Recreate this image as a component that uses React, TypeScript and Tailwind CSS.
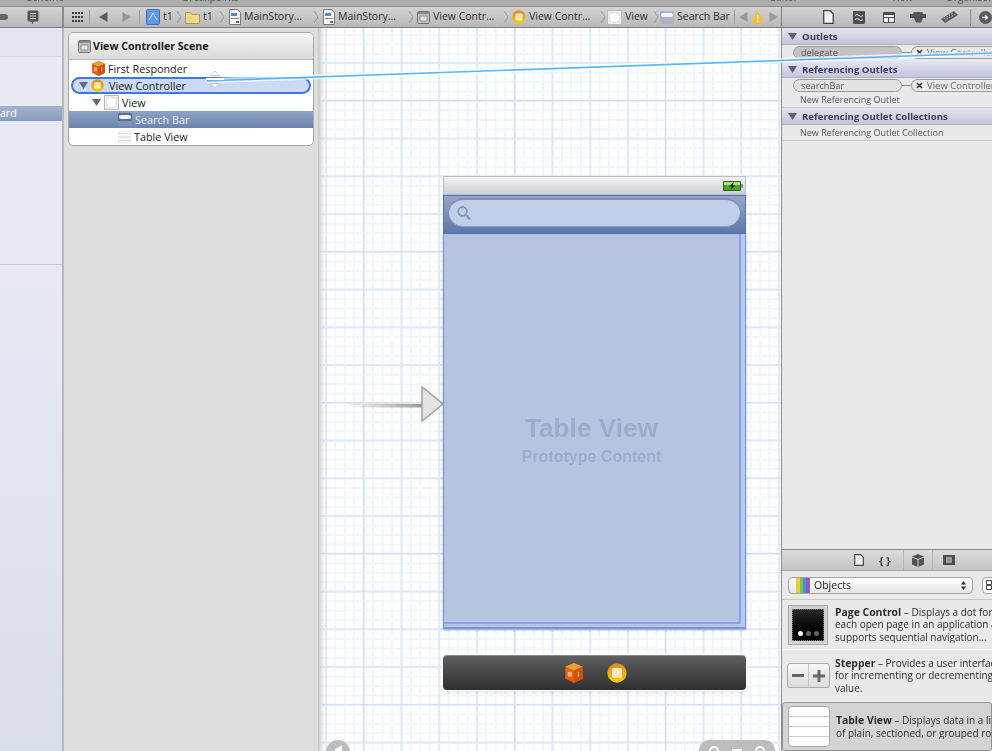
import React from "react";

const f = "font-['Open_Sans','Liberation_Sans',sans-serif]";

function Chevron() {
  return (
    <svg width="6" height="14" viewBox="0 0 6 14" className="shrink-0">
      <path d="M1 1l4 6-4 6" fill="none" stroke="#8f8f8f" strokeWidth="0.8" />
    </svg>
  );
}
function DocIcon() {
  return (
    <svg width="12" height="16" viewBox="0 0 12 16" className="shrink-0">
      <path d="M.5.5h8l3 3v12H.5z" fill="#f4f6f8" stroke="#777" />
      <rect x="2" y="4" width="6" height="3" fill="#5b86c8" />
      <rect x="2" y="9" width="8" height="1" fill="#888" />
      <rect x="7" y="12" width="3" height="2" fill="#666" />
    </svg>
  );
}
function ProjectIcon() {
  return (
    <svg width="14" height="16" viewBox="0 0 14 16" className="shrink-0">
      <rect x=".5" y=".5" width="13" height="15" rx="1" fill="#5f98ea" stroke="#3c6fc0" />
      <path d="M3 11l4-7 4 7" fill="none" stroke="#e8f1ff" strokeWidth="1" />
    </svg>
  );
}
function FolderIcon() {
  return (
    <svg width="15" height="13" viewBox="0 0 15 13" className="shrink-0">
      <path d="M.5 12.500v-11h5l1.500 2h7.500v9z" fill="#ecd98b" stroke="#a8975a" />
    </svg>
  );
}
function SceneIcon({ size = 13 }: { size?: number }) {
  return (
    <svg width={size} height={size} viewBox="0 0 13 13" className="shrink-0">
      <rect x=".5" y=".5" width="12" height="12" rx="1" fill="#c4c4c4" stroke="#707070" />
      <rect x="1" y="1" width="11" height="2" fill="#8a8a8a" />
      <rect x="3" y="5" width="7" height="5" fill="#e2e2e2" stroke="#777" strokeWidth="0.7" />
    </svg>
  );
}
function VCIcon({ size = 14 }: { size?: number }) {
  return (
    <svg width={size} height={size} viewBox="0 0 14 14" className="shrink-0">
      <defs>
        <linearGradient id="vcg" x1="0" y1="0" x2="0" y2="1">
          <stop offset="0" stopColor="#e08a1e" />
          <stop offset="1" stopColor="#f5d000" />
        </linearGradient>
      </defs>
      <circle cx="7" cy="7" r="6.800" fill="url(#vcg)" />
      <rect x="3.500" y="3.500" width="7" height="7" rx="1" fill="#fbe6bf" />
    </svg>
  );
}
function ViewIcon() {
  return (
    <svg width="15" height="15" viewBox="0 0 15 15" className="shrink-0">
      <rect x=".5" y=".5" width="14" height="14" fill="#ececec" stroke="#bbb" />
      <circle cx="7.500" cy="7.500" r="5" fill="#fff" stroke="#d0d0d0" strokeDasharray="1 1" />
    </svg>
  );
}
function SearchBarIcon({ light = false }: { light?: boolean }) {
  return (
    <svg width="14" height="13" viewBox="0 0 14 13" className="shrink-0">
      <rect x="0" y="0" width="14" height="13" fill={light ? "#5c7094" : "#a9b4c8"} />
      <rect x="1" y="2" width="12" height="4" rx="2" fill="#f2f4f8" />
      {light && <rect x="0" y="8" width="14" height="5" fill="#7e93b8" />}
    </svg>
  );
}
function TableIcon() {
  return (
    <svg width="13" height="14" viewBox="0 0 13 14" className="shrink-0">
      <rect x="0" y="0" width="13" height="14" fill="#f6f6f6" />
      <path d="M0 3.500h13M0 7h13M0 10.500h13" stroke="#dcdcdc" />
    </svg>
  );
}
function CubeIcon({ size = 14 }: { size?: number }) {
  return (
    <svg width={size} height={size + 2} viewBox="0 0 14 16" className="shrink-0">
      <path d="M7 0l7 3v9.500L7 16 0 12.500V3z" fill="#e0600f" />
      <path d="M7 0l7 3-7 3-7-3z" fill="#f29a3e" />
      <path d="M7 6l7-3v9.500L7 16z" fill="#c9520c" />
      <rect x="2" y="7" width="3.500" height="4" fill="#f5b37a" />
      <rect x="10" y="7" width="1" height="4" fill="#f5b37a" />
    </svg>
  );
}

function JumpItem({ w, icon, label }: { w: string; icon: React.ReactNode; label?: string }) {
  return (
    <div className={`flex items-center gap-[3px] shrink-0 ${w}`}>
      {icon}
      {label && <span className="text-[10.500px] text-[#2e2e2e] whitespace-nowrap">{label}</span>}
    </div>
  );
}

function Toolbar() {
  return (
    <div className="flex h-[21px] shrink-0 bg-gradient-to-b from-[#d2d2d2] to-[#b9b9b9] border-b border-[#7d7d7d]">
      <div className="w-[64px] shrink-0 border-r-2 border-[#8c8c8c] flex items-center relative">
        <div className="w-[8px] h-[6px] bg-[#666] rounded-r-full" />
        <svg width="12" height="15" viewBox="0 0 12 15" className="ml-[19px]">
          <path d="M1.500.5h9l1 1v9l-1 1H7l-1.500 2.500L4 11.500H1.500l-1-1v-9z" fill="#555" />
          <path d="M3 3.500h6M3 6h6M3 8.500h6" stroke="#ddd" />
        </svg>
      </div>
      <div className="w-[717px] shrink-0 flex items-center pl-[8px]">
        <svg width="11" height="10" viewBox="0 0 11 10" className="shrink-0">
          <path d="M0 1h11M0 5h11M0 9h11" stroke="#3a3a3a" strokeWidth="2" strokeDasharray="2 1" />
        </svg>
        <div className="w-px h-[14px] bg-[#9c9c9c] ml-[6px]" />
        <svg width="9" height="10" viewBox="0 0 9 10" className="ml-[9px]"><path d="M8.500 0v10L0 5z" fill="#5c5c5c" /></svg>
        <svg width="9" height="10" viewBox="0 0 9 10" className="ml-[14px]"><path d="M.5 0v10L9 5z" fill="#969696" /></svg>
        <div className="w-px h-[14px] bg-[#9c9c9c] ml-[8px]" />
        <div className="flex items-center ml-[6px]">
          <JumpItem w="w-[30px]" icon={<ProjectIcon />} label="t1" />
          <Chevron />
          <JumpItem w="w-[34px] ml-[3px]" icon={<FolderIcon />} label="t1" />
          <Chevron />
          <JumpItem w="w-[84px] ml-[4px]" icon={<DocIcon />} label="MainStory..." />
          <Chevron />
          <JumpItem w="w-[85px] ml-[4px]" icon={<DocIcon />} label="MainStory..." />
          <Chevron />
          <JumpItem w="w-[86px] ml-[3px]" icon={<SceneIcon />} label="View Contr..." />
          <Chevron />
          <JumpItem w="w-[88px] ml-[3px]" icon={<VCIcon />} label="View Contr..." />
          <Chevron />
          <JumpItem w="w-[46px] ml-[1px]" icon={<ViewIcon />} label="View" />
          <Chevron />
          <JumpItem w="w-[74px] ml-[1px]" icon={<SearchBarIcon />} label="Search Bar" />
        </div>
        <div className="w-px h-[14px] bg-[#9c9c9c]" />
        <svg width="9" height="10" viewBox="0 0 9 10" className="ml-[4px]"><path d="M8.500 0v10L0 5z" fill="#9a9a9a" /></svg>
        <svg width="13" height="12" viewBox="0 0 13 12" className="ml-[3px]"><path d="M6.500 0L13 12H0z" fill="#f2c32e" /><rect x="6" y="4" width="1.200" height="4.500" fill="#fff" /><rect x="6" y="9.500" width="1.200" height="1.300" fill="#fff" /></svg>
        <svg width="9" height="10" viewBox="0 0 9 10" className="ml-[5px]"><path d="M.5 0v10L9 5z" fill="#9a9a9a" /></svg>
      </div>
      <div className="flex-1 border-l border-[#7d7d7d] flex items-center pl-[41px]">
        <svg width="11" height="14" viewBox="0 0 11 14" className="shrink-0"><path d="M.7.7h6.500l3 3v9.600H.7z" fill="#f2f2f2" stroke="#444" strokeWidth="1.300" /></svg>
        <svg width="12" height="13" viewBox="0 0 12 13" className="ml-[19px] shrink-0"><rect width="12" height="13" rx="1" fill="#4e4e4e" /><path d="M2 4.500q2-2 4 0t4 0M2 8.500q2-2 4 0t4 0" stroke="#ddd" fill="none" /></svg>
        <svg width="12" height="11" viewBox="0 0 12 11" className="ml-[18px] shrink-0"><rect width="12" height="11" rx="1" fill="#4e4e4e" /><rect x="1" y="3" width="10" height="2" fill="#eee" /><rect x="1" y="6" width="4" height="4" fill="#eee" /><rect x="6" y="6" width="5" height="4" fill="#eee" /></svg>
        <svg width="16" height="12" viewBox="0 0 16 12" className="ml-[15px] shrink-0"><path d="M4 1h8l1 2h3v4h-3l-2 4.500H6L4 7H0V3h3z" fill="#555" /></svg>
        <svg width="17" height="12" viewBox="0 0 17 12" className="ml-[15px] shrink-0"><path d="M0 8L13 0l4 4L4 12z" fill="#5a5a5a" /><path d="M3 7.500l9-5.500M4.500 9l9-5.500" stroke="#ddd" strokeDasharray="1 1" /></svg>
        <div className="w-px h-[17px] bg-[#8f8f8f] ml-[12px]" />
        <svg width="13" height="13" viewBox="0 0 13 13" className="ml-[8px] shrink-0"><circle cx="6.500" cy="6.500" r="6.500" fill="#5a5a5a" /><path d="M3 6.500h5M6 4l2.500 2.500L6 9" stroke="#eee" strokeWidth="1.300" fill="none" /></svg>
      </div>
    </div>
  );
}

function Navigator() {
  return (
    <div className="w-[64px] shrink-0 bg-[#e7eaf1] border-r-2 border-[#b9b9b9] flex flex-col overflow-hidden">
      <div className="h-[29px] bg-[#e3e6ee] border-b border-[#d6d9e0]" />
      <div className="h-[49px]" />
      <div className="h-[15px] bg-gradient-to-b from-[#a5b3cd] to-[#8a9cbc] text-white text-[10.500px] leading-[15px] font-normal">ard</div>
      <div className="h-[144px] border-b border-[#c8c8c8]" />
      <div className="flex-1 bg-gradient-to-b from-[#e7eaf1] to-[#d8deea]" />
    </div>
  );
}

function OutlineRow({ indent, tri, icon, label, cls }: { indent: string; tri?: boolean; icon: React.ReactNode; label: string; cls?: string }) {
  return (
    <div className={`h-[17px] flex items-center ${indent} ${cls ?? ""}`}>
      {tri && (
        <svg width="9" height="7" viewBox="0 0 9 7" className="mr-[3px] shrink-0"><path d="M0 0h9L4.500 7z" fill="#5f6c7d" /></svg>
      )}
      {icon}
      <span className="ml-[3px] pt-[2px] text-[10.800px] whitespace-nowrap">{label}</span>
    </div>
  );
}

function Outline() {
  return (
    <div className="w-[255px] shrink-0 bg-[#dedede] border-r border-[#c9c9c9] pl-[4px] pt-[4px]">
      <div className="w-[246px] rounded-[5px] border border-[#a7a7a7] bg-white overflow-hidden text-[#222]">
        <div className="h-[27px] bg-gradient-to-b from-[#f6f6f6] to-[#d9d9d9] border-b border-[#b9b9b9] flex items-center pl-[9px]">
          <SceneIcon size={13} />
          <span className="ml-[2px] pt-[2px] text-[10.600px] font-bold whitespace-nowrap">View Controller Scene</span>
        </div>
        <OutlineRow indent="pl-[23px]" icon={<CubeIcon size={13} />} label="First Responder" />
        <div className="h-[17px] mx-[2px] rounded-full border-2 border-[#3f78dd] bg-[#ccd9f3] flex items-center pl-[6px]">
          <svg width="9" height="7" viewBox="0 0 9 7" className="mr-[3px] shrink-0"><path d="M0 0h9L4.500 7z" fill="#5f6c7d" /></svg>
          <VCIcon size={13} />
          <span className="ml-[5px] pt-[2px] text-[10.800px] whitespace-nowrap">View Controller</span>
        </div>
        <OutlineRow indent="pl-[23px]" tri icon={<ViewIcon />} label="View" />
        <OutlineRow
          indent="pl-[49px]"
          cls="bg-gradient-to-b from-[#8ea3c4] to-[#6b84ad] text-[#e8ecf3]"
          icon={<SearchBarIcon light />}
          label="Search Bar"
        />
        <OutlineRow indent="pl-[49px]" icon={<TableIcon />} label="Table View" />
      </div>
    </div>
  );
}

function Scene() {
  return (
    <div className="absolute left-[124px] top-[148px] w-[303px]">
      <div className="h-[19px] bg-gradient-to-b from-[#f0f2f4] to-[#ccd0d0] border border-[#b6bcc8] flex items-center justify-end pr-[2px]">
        <svg width="20" height="10" viewBox="0 0 20 10">
          <rect x="0" y="0" width="18" height="10" rx="1" fill="#4a4a4a" />
          <rect x="1" y="1" width="16" height="8" fill="#3fb010" />
          <rect x="1" y="1" width="16" height="3" fill="#a9e27a" />
          <rect x="18" y="3" width="2" height="4" fill="#8c8c8c" />
          <path d="M11 1L6 5.500h3L7.500 9l5-4.500h-3z" fill="#111" />
        </svg>
      </div>
      <div className="h-[39px] bg-gradient-to-b from-[#95a6cb] to-[#5f79a8] border border-[#4f6fd3] px-[5px] pt-[2px]">
        <div className="h-[29px] rounded-full bg-[#bfcfe7] border-t-2 border-b border-t-[#7d8fb0] border-b-[#8ea3c6] flex items-center pl-[8px]">
          <svg width="14" height="14" viewBox="0 0 14 14">
            <circle cx="5.500" cy="5.500" r="4.300" fill="none" stroke="#8494b0" strokeWidth="1.800" />
            <path d="M9 9l4 4.500" stroke="#8494b0" strokeWidth="2" />
          </svg>
        </div>
      </div>
      <div className="h-[395px] bg-[#b6c5dd] border-x border-b-2 border-[#7a94e0] shadow-[0_1px_2px_rgba(60,90,170,0.5)] flex">
        <div className="flex-1 border-b-2 border-[#8aa2e6] border-r-2 mb-[3px] flex flex-col items-center pt-[179px] font-['Liberation_Sans',sans-serif] font-bold text-[#9dadc9]">
          <div className="text-[26px] leading-[30px] tracking-[0.1px]">Table View</div>
          <div className="text-[16px] leading-[28px]">Prototype Content</div>
        </div>
        <div className="w-[4px] bg-[#b8c8ee]" />
      </div>
      <div className="mt-[26px] h-[35px] rounded-[4px] bg-gradient-to-b from-[#5f5f5f] to-[#2f2f2f] border-t border-[#888] shadow-[0_0_0_1.500px_rgba(255,255,255,0.95),0_2px_3px_rgba(0,0,0,0.2)] flex items-center justify-center gap-[24px] pl-[3px]">
        <CubeIcon size={18} />
        <VCIcon size={20} />
      </div>
    </div>
  );
}

function Canvas() {
  return (
    <div className="w-[462px] shrink-0 relative overflow-hidden bg-white bg-[linear-gradient(to_right,#cfe0fb_1.500px,transparent_1.500px),linear-gradient(to_bottom,#cfe0fb_1.500px,transparent_1.500px),linear-gradient(to_right,#deeafc_1.500px,transparent_1.500px),linear-gradient(to_bottom,#deeafc_1.500px,transparent_1.500px),linear-gradient(to_right,#f0f5fe_2px,transparent_2px),linear-gradient(to_bottom,#f0f5fe_2px,transparent_2px)] bg-[size:151px_151px,151px_151px,37.75px_37.75px,37.75px_37.75px,9.44px_9.44px,9.44px_9.44px] bg-[position:44px_0,0_72px,6px_0,0_34px,6px_0,0_6px]">
      <div className="absolute left-0 top-0 bottom-0 w-[6px] bg-gradient-to-r from-[#d2d2d2] to-transparent" />
      <svg width="96" height="40" viewBox="0 0 96 40" className="absolute left-[29px] top-[357px]">
        <defs>
          <linearGradient id="tail" x1="0" y1="0" x2="1" y2="0">
            <stop offset="0" stopColor="#9a9a9a" stopOpacity="0" />
            <stop offset="1" stopColor="#9a9a9a" />
          </linearGradient>
        </defs>
        <rect x="0" y="17" width="74" height="2.500" fill="#e2e2e2" />
        <rect x="0" y="19" width="74" height="3.500" fill="url(#tail)" />
        <path d="M75 3l3 0 17 16-20 18z" fill="#cfcfcf" opacity="0.6" />
        <path d="M74 2l21 17-21 17z" fill="#e4e4e4" stroke="#a2a2a2" strokeWidth="1.500" />
      </svg>
      <Scene />
      <div className="absolute left-[7px] top-[712px] w-[24px] h-[24px] rounded-full bg-[#bdbdbd] flex justify-center pt-[4px]">
        <svg width="10" height="10" viewBox="0 0 10 10"><path d="M9 1L1 6l8 4z" fill="#fff" /></svg>
      </div>
      <div className="absolute left-[380px] top-[712px] w-[76px] h-[24px] rounded-[10px] bg-[#bdbdbd] flex items-start justify-around pt-[6px] px-[4px]">
        <div className="w-[10px] h-[10px] rounded-full border-2 border-white" />
        <div className="w-[10px] h-[3px] mt-[3px] bg-white" />
        <div className="w-[10px] h-[10px] rounded-full border-2 border-white" />
      </div>
    </div>
  );
}

function SectionHeader({ label }: { label: string }) {
  return (
    <div className="h-[17px] shrink-0 bg-gradient-to-b from-[#e2e4f2] to-[#c3c6dc] border-b border-[#aeb0bd] flex items-center pl-[6px]">
      <svg width="9" height="7" viewBox="0 0 9 7" className="shrink-0"><path d="M0 0h9L4.500 7z" fill="#5c5f6b" /></svg>
      <span className="ml-[5px] pt-[2px] text-[9.600px] font-bold text-[#3b3f4d] whitespace-nowrap">{label}</span>
    </div>
  );
}

function Connection({ name, dark }: { name: string; dark?: boolean }) {
  return (
    <div className="h-[15px] flex items-start pl-[11px] overflow-hidden">
      <div className={`w-[109px] h-[13px] mt-px rounded-full border border-[#9a9a9a] pl-[7px] text-[9.200px] leading-[12px] text-[#555] shrink-0 ${dark ? "bg-[#c3c3c3]" : "bg-[#e2e2e2]"}`}>{name}</div>
      <div className="w-[9px] h-px bg-[#8a8a8a] mt-[7px] shrink-0" />
      <div className="w-[100px] h-[13px] mt-px rounded-l-full border border-[#9a9a9a] border-r-0 pl-[4px] flex items-center gap-[4px] text-[9.500px] text-[#666] whitespace-nowrap shrink-0">
        <svg width="7" height="7" viewBox="0 0 7 7" className="shrink-0"><path d="M1 1l5 5M6 1L1 6" stroke="#333" strokeWidth="1.600" /></svg>
        <span className="pt-px">View Controller</span>
      </div>
    </div>
  );
}

function LibItem({ h, thumb, title, lines, selected }: { h: string; thumb: React.ReactNode; title: string; lines: string[]; selected?: boolean }) {
  return (
    <div className={`flex items-center shrink-0 pl-[4px] ${h} ${selected ? "bg-[#d4d4d4] border border-[#8f8f8f] rounded-[3px]" : "border-b border-[#f6f6f6]"}`}>
      <div className="w-[44px] shrink-0 flex justify-center">{thumb}</div>
      <div className="ml-[5px] text-[10px] leading-[12.500px] text-[#2c2c2c] whitespace-nowrap overflow-hidden">
        <div><span className="font-bold text-[10.400px]">{title}</span> – {lines[0]}</div>
        {lines.slice(1).map((l) => (<div key={l}>{l}</div>))}
      </div>
    </div>
  );
}

function Inspector() {
  return (
    <div className="flex-1 bg-[#e9e9e9] border-l border-[#8b8b8b] flex flex-col overflow-hidden">
      <SectionHeader label="Outlets" />
      <Connection name="delegate" dark />
      <div className="h-px" />
      <SectionHeader label="Referencing Outlets" />
      <Connection name="searchBar" />
      <div className="h-[15px] shrink-0 pl-[18px] pt-px text-[9px] leading-[12px] text-[#555] border-b border-[#c8c8c8]">New Referencing Outlet</div>
      <SectionHeader label="Referencing Outlet Collections" />
      <div className="h-[16px] pl-[18px] pt-px text-[9px] leading-[14px] text-[#555] border-b border-[#c8c8c8] shrink-0">New Referencing Outlet Collection</div>
      <div className="h-[409px] shrink-0 border-b border-[#8b8b8b]" />
      <div className="h-[21px] shrink-0 bg-gradient-to-b from-[#dcdcdc] to-[#c4c4c4] border-b border-[#a5a5a5] flex items-center pl-[72px]">
        <svg width="10" height="12" viewBox="0 0 10 12"><path d="M.7.7h6l2.600 2.600v8H.7z" fill="#eee" stroke="#444" strokeWidth="1.200" /></svg>
        <span className="ml-[15px] text-[11px] font-bold text-[#444] leading-none w-[17px]">{"{ }"}</span>
        <div className="w-px h-[20px] bg-[#b5b5b5] ml-[7px]" />
        <div className="ml-[8px]"><svg width="12" height="13" viewBox="0 0 12 13"><path d="M6 0l6 2.500v8L6 13l-6-2.500v-8z" fill="#555" /><path d="M0 3l6 2.500L12 3M6 5.500V13" stroke="#ccc" fill="none" /></svg></div>
        <div className="w-px h-[20px] bg-[#b5b5b5] ml-[8px]" />
        <div className="ml-[10px]"><svg width="12" height="10" viewBox="0 0 12 10"><rect width="12" height="10" fill="#4e4e4e" /><rect x="3" y="2" width="6" height="6" fill="#999" /></svg></div>
      </div>
      <div className="h-[29px] shrink-0 flex items-center pl-[6px] border-b border-[#c6c6c6]">
        <div className="w-[185px] h-[17px] rounded-[4px] bg-gradient-to-b from-white to-[#e5e5e5] border border-[#a4a4a4] flex items-center pl-[7px] pr-[6px] shrink-0">
          <svg width="14" height="15" viewBox="0 0 14 15" className="shrink-0">
            <rect x="0" width="4" height="15" fill="#e4cf3a" />
            <rect x="4" width="3" height="15" fill="#7cc341" />
            <rect x="7" width="3" height="15" fill="#4a8ee0" />
            <rect x="10" width="4" height="15" fill="#8a5ac8" />
          </svg>
          <span className="ml-[4px] pt-px text-[10.500px] text-[#222] flex-1">Objects</span>
          <svg width="5" height="9" viewBox="0 0 5 9" className="shrink-0"><path d="M2.500 0L5 3.500H0zM2.500 9L0 5.500h5z" fill="#333" /></svg>
        </div>
        <div className="ml-[9px] w-[20px] h-[17px] rounded-l-[4px] bg-white border border-[#a4a4a4] flex items-center pl-[3px] shrink-0">
          <svg width="6" height="10" viewBox="0 0 6 10"><path d="M.5.500h5v4h-5zM.5 5.500h5v4h-5z" fill="none" stroke="#444" /></svg>
        </div>
      </div>
      <LibItem
        h="h-[50px]"
        title="Page Control"
        lines={["Displays a dot for", "each open page in an application and", "supports sequential navigation..."]}
        thumb={
          <div className="w-[40px] h-[40px] p-[3px] bg-[#d2d2d2] border border-[#aaa]">
            <div className="w-full h-full bg-gradient-to-b from-[#2a2a2a] to-black border border-dotted border-[#777] flex items-end justify-center gap-[3px] pb-[4px]">
              <span className="w-[5px] h-[5px] rounded-full bg-white" />
              <span className="w-[5px] h-[5px] rounded-full bg-[#666]" />
              <span className="w-[5px] h-[5px] rounded-full bg-[#666]" />
            </div>
          </div>
        }
      />
      <LibItem
        h="h-[52px]"
        title="Stepper"
        lines={["Provides a user interface", "for incrementing or decrementing a", "value."]}
        thumb={
          <div className="w-[43px] h-[25px] rounded-[3px] border border-[#a8a8a8] bg-gradient-to-b from-[#f6f6f6] to-[#dcdcdc] flex text-[#666] shrink-0">
            <div className="flex-1 flex items-center justify-center border-r border-[#c4c4c4]"><div className="w-[12px] h-[3px] bg-[#666]" /></div>
            <div className="flex-1 flex items-center justify-center relative">
              <svg width="12" height="12" viewBox="0 0 12 12"><path d="M0 6h12M6 0v12" stroke="#666" strokeWidth="3" /></svg>
            </div>
          </div>
        }
      />
      <LibItem
        h="h-[49px]"
        selected
        title="Table View"
        lines={["Displays data in a list", "of plain, sectioned, or grouped rows"]}
        thumb={
          <div className="w-[42px] h-[41px] rounded-[4px] bg-white border border-[#a8a8a8] flex flex-col justify-evenly">
            <div className="h-px bg-[#ccc]" />
            <div className="h-px bg-[#ccc]" />
            <div className="h-px bg-[#ccc]" />
          </div>
        }
      />
    </div>
  );
}

export default function App() {
  return (
    <div className={`relative w-[992px] h-[751px] overflow-hidden flex flex-col ${f} blur-[0.35px]`}>
      <div className="h-[7px] shrink-0 overflow-hidden bg-[#adadad] border-b border-[#8e8e8e] relative text-[10px] text-[#555] leading-[10px]">
        <div className="flex -mt-[8px]">
          <span className="ml-[27px] w-[161px]">Scheme</span>
          <span className="w-[607px]">Breakpoints</span>
          <span className="w-[125px]">Editor</span>
          <span className="w-[57px]">View</span>
          <span>Organizer</span>
        </div>
      </div>
      <Toolbar />
      <div className="flex flex-1 min-h-0">
        <Navigator />
        <Outline />
        <Canvas />
        <Inspector />
      </div>
      <svg width="992" height="120" viewBox="0 0 992 120" className="absolute left-0 top-0 pointer-events-none">
        <path d="M207 80.800L992 53" stroke="#fff" strokeOpacity="0.7" strokeWidth="5" />
        <path d="M207 80.800L992 53" stroke="#58b6ff" strokeWidth="1.700" />
        <path d="M215 71l5 4.500h-10z" fill="#fff" stroke="#b5b5b5" strokeWidth="0.7" />
        <path d="M215 88l5-4.500h-10z" fill="#fff" stroke="#b5b5b5" strokeWidth="0.7" />
        <rect x="206" y="78" width="18" height="2" fill="#fff" />
      </svg>
    </div>
  );
}
